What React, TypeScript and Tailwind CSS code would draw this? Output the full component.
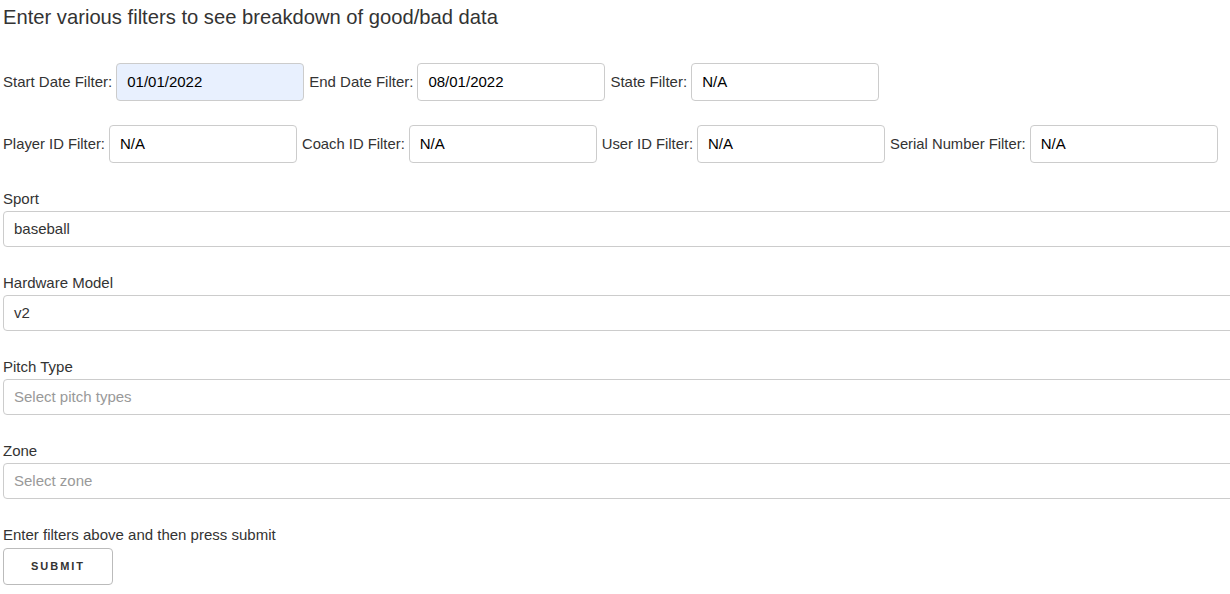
import React from 'react';

const rowOne = [
  { label: 'Start Date Filter:', value: '01/01/2022', filled: true },
  { label: 'End Date Filter:', value: '08/01/2022' },
  { label: 'State Filter:', value: 'N/A' },
];

const rowTwo = [
  { label: 'Player ID Filter:', value: 'N/A' },
  { label: 'Coach ID Filter:', value: 'N/A' },
  { label: 'User ID Filter:', value: 'N/A' },
  { label: 'Serial Number Filter:', value: 'N/A' },
];

const selects = [
  { label: 'Sport', value: 'baseball' },
  { label: 'Hardware Model', value: 'v2' },
  { label: 'Pitch Type', placeholder: 'Select pitch types' },
  { label: 'Zone', placeholder: 'Select zone' },
];

type Filter = { label: string; value: string; filled?: boolean };

const FilterRow: React.FC<{ items: Filter[]; tight?: boolean }> = ({ items, tight }) => (
  <div className="flex items-center">
    {items.map((f) => (
      <div key={f.label} className="flex items-center mr-[5px]">
        <span className={`text-[#333] mr-[4px] ${tight ? 'text-[14.8px]' : 'text-[15px]'}`}>{f.label}</span>
        <div
          className={`w-[188px] h-[38px] flex items-center px-[10px] rounded-[4px] border border-[#ccc] text-[15px] text-black ${
            f.filled ? 'bg-[#e8f0fe]' : 'bg-white'
          }`}
        >
          {f.value}
        </div>
      </div>
    ))}
  </div>
);

export default function App() {
  return (
    <div className="w-[1230px] h-[594px] overflow-hidden bg-white pl-[3px] font-['Liberation_Sans',Arial,sans-serif]">
      <h1 className="text-[20.2px] text-[#333] pt-[6px] leading-[22px]">
        Enter various filters to see breakdown of good/bad data
      </h1>

      <div className="mt-[35px]">
        <FilterRow items={rowOne} />
      </div>
      <div className="mt-[24px]">
        <FilterRow items={rowTwo} tight />
      </div>

      <div className="mt-[27px] flex flex-col">
        {selects.map((s) => (
          <div key={s.label} className="mb-[27px] last:mb-0">
            <div className="text-[15px] text-[#333] leading-[18px] mb-[3px]">{s.label}</div>
            <div className="w-[1260px] h-[36px] flex items-center px-[10px] rounded-[4px] border border-[#ccc] text-[15px]">
              {s.value ? (
                <span className="text-[#333]">{s.value}</span>
              ) : (
                <span className="text-[#999]">{s.placeholder}</span>
              )}
            </div>
          </div>
        ))}
      </div>

      <div className="mt-[27px] text-[15px] text-[#333] leading-[18px]">
        Enter filters above and then press submit
      </div>
      <button className="mt-[4px] w-[110px] h-[37px] rounded-[4px] border border-[#bbb] bg-white text-[11px] font-bold tracking-[2px] text-[#333]">
        SUBMIT
      </button>
    </div>
  );
}
